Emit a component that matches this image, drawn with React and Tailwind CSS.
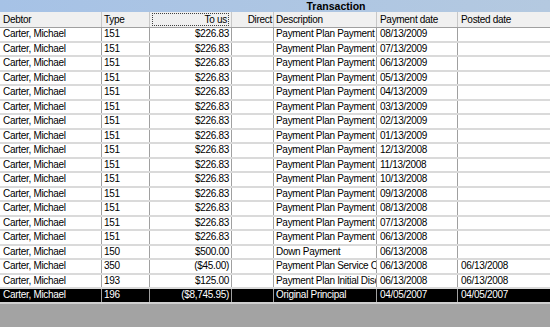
const rows = [
  ["Carter, Michael", "151", "$226.83", "", "Payment Plan Payment", "08/13/2009", ""],
  ["Carter, Michael", "151", "$226.83", "", "Payment Plan Payment", "07/13/2009", ""],
  ["Carter, Michael", "151", "$226.83", "", "Payment Plan Payment", "06/13/2009", ""],
  ["Carter, Michael", "151", "$226.83", "", "Payment Plan Payment", "05/13/2009", ""],
  ["Carter, Michael", "151", "$226.83", "", "Payment Plan Payment", "04/13/2009", ""],
  ["Carter, Michael", "151", "$226.83", "", "Payment Plan Payment", "03/13/2009", ""],
  ["Carter, Michael", "151", "$226.83", "", "Payment Plan Payment", "02/13/2009", ""],
  ["Carter, Michael", "151", "$226.83", "", "Payment Plan Payment", "01/13/2009", ""],
  ["Carter, Michael", "151", "$226.83", "", "Payment Plan Payment", "12/13/2008", ""],
  ["Carter, Michael", "151", "$226.83", "", "Payment Plan Payment", "11/13/2008", ""],
  ["Carter, Michael", "151", "$226.83", "", "Payment Plan Payment", "10/13/2008", ""],
  ["Carter, Michael", "151", "$226.83", "", "Payment Plan Payment", "09/13/2008", ""],
  ["Carter, Michael", "151", "$226.83", "", "Payment Plan Payment", "08/13/2008", ""],
  ["Carter, Michael", "151", "$226.83", "", "Payment Plan Payment", "07/13/2008", ""],
  ["Carter, Michael", "151", "$226.83", "", "Payment Plan Payment", "06/13/2008", ""],
  ["Carter, Michael", "150", "$500.00", "", "Down Payment", "06/13/2008", ""],
  ["Carter, Michael", "350", "($45.00)", "", "Payment Plan Service Charge", "06/13/2008", "06/13/2008"],
  ["Carter, Michael", "193", "$125.00", "", "Payment Plan Initial Discount", "06/13/2008", "06/13/2008"],
  ["Carter, Michael", "196", "($8,745.95)", "", "Original Principal", "04/05/2007", "04/05/2007"],
];

const cols = "grid grid-cols-[102px_48px_82px_42px_103px_81px_1fr]";

export default function App() {
  return (
    <div
      className="w-[550px] h-[327px] overflow-hidden bg-[#a3a3a3] text-[10px] tracking-[-0.3px] leading-none text-black"
      style={{ fontFamily: '"Liberation Sans", Arial, sans-serif' }}
    >
      {/* group title */}
      <div className="h-[12px] bg-gradient-to-r from-[#a6c2e6] to-[#b4c9e0] flex items-center justify-center pl-[122px] font-bold text-[10.5px] tracking-normal">
        Transaction
      </div>
      {/* header */}
      <div className={`${cols} h-[16px] bg-[#f0f0f0] border-b border-[#a0a0a0]`}>
        <div className="px-[3px] flex items-center border-r border-[#c8c8c8]">Debtor</div>
        <div className="px-[2px] flex items-center border-r border-[#c8c8c8]">Type</div>
        <div className="px-[2px] flex items-center justify-end border-r border-[#c8c8c8]">
          <span className="border border-dotted border-[#404040] w-full h-[13px] flex items-center justify-end pr-[1px]">To us</span>
        </div>
        <div className="px-[1px] flex items-center justify-end border-r border-[#c8c8c8] overflow-hidden whitespace-nowrap">Direct</div>
        <div className="px-[2px] flex items-center border-r border-[#c8c8c8]">Description</div>
        <div className="px-[3px] flex items-center border-r border-[#c8c8c8]">Payment date</div>
        <div className="px-[3px] flex items-center">Posted date</div>
      </div>
      {/* rows */}
      {rows.map((r, i) => {
        const last = i === rows.length - 1;
        return (
          <div
            key={i}
            className={`${cols} h-[14.5px] border-b-2 ${last ? "bg-black text-white border-[#d0d0d0]" : "bg-white border-[#dadada]"}`}
          >
            <div className="px-[3px] flex items-center border-r border-[#a0a0a0] overflow-hidden whitespace-nowrap">{r[0]}</div>
            <div className="px-[2px] flex items-center border-r border-[#a0a0a0]">{r[1]}</div>
            <div className="px-[2px] flex items-center justify-end border-r border-[#a0a0a0]">{r[2]}</div>
            <div className="px-[2px] flex items-center border-r border-[#a0a0a0]">{r[3]}</div>
            <div className="pl-[2px] flex items-center border-r border-[#a0a0a0] overflow-hidden whitespace-nowrap">{r[4]}</div>
            <div className="px-[3px] flex items-center border-r border-[#a0a0a0]">{r[5]}</div>
            <div className="px-[3px] flex items-center">{r[6]}</div>
          </div>
        );
      })}
    </div>
  );
}
